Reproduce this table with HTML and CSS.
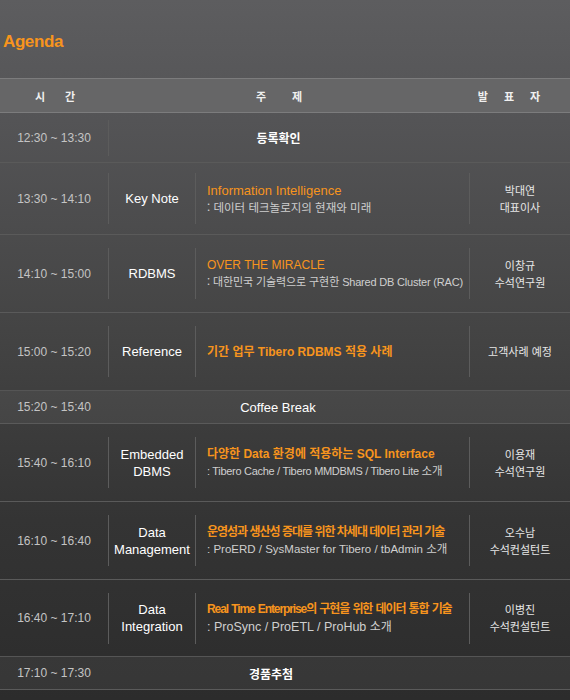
FILE: index.html
```html
<!DOCTYPE html>
<html lang="ko">
<head>
<meta charset="utf-8">
<title>Agenda</title>
<link rel="stylesheet" href="styles.css">
</head>
<body>
<div class="page">
  <h1 class="title">Agenda</h1>
  <div class="head">
    <div class="hcell h-time"><span>시</span><span>간</span></div>
    <div class="hcell h-topic"><span>주</span><span>제</span></div>
    <div class="hcell h-spk"><span>발</span><span>표</span><span>자</span></div>
  </div>

  <div class="row r50">
    <div class="time">12:30 ~ 13:30</div>
    <div class="merged sep"><span class="event">등록확인</span></div>
  </div>

  <div class="row r72">
    <div class="time">13:30 ~ 14:10</div>
    <div class="cell track sep">Key Note</div>
    <div class="cell topic sep">
      <div class="t-main">Information Intelligence</div>
      <div class="t-sub">: 데이터 테크놀로지의 현재와 미래</div>
    </div>
    <div class="cell spk sep">박대연<br>대표이사</div>
  </div>

  <div class="row r78">
    <div class="time">14:10 ~ 15:00</div>
    <div class="cell track sep">RDBMS</div>
    <div class="cell topic sep">
      <div class="t-main caps">OVER THE MIRACLE</div>
      <div class="t-sub small">: 대한민국 기술력으로 구현한 <span class="en">Shared DB Cluster (RAC)</span></div>
    </div>
    <div class="cell spk sep">이창규<br>수석연구원</div>
  </div>

  <div class="row r78">
    <div class="time">15:00 ~ 15:20</div>
    <div class="cell track sep">Reference</div>
    <div class="cell topic sep">
      <div class="t-main kr">기간 업무 Tibero RDBMS 적용 사례</div>
    </div>
    <div class="cell spk sep">고객사례 예정</div>
  </div>

  <div class="row r34 light">
    <div class="time">15:20 ~ 15:40</div>
    <div class="merged"><span class="event ev-en">Coffee Break</span></div>
  </div>

  <div class="row r78">
    <div class="time">15:40 ~ 16:10</div>
    <div class="cell track sep">Embedded<br>DBMS</div>
    <div class="cell topic sep">
      <div class="t-main kr">다양한 Data 환경에 적용하는 SQL Interface</div>
      <div class="t-sub"><span class="en tight">: Tibero Cache / Tibero MMDBMS / Tibero Lite </span>소개</div>
    </div>
    <div class="cell spk sep">이용재<br>수석연구원</div>
  </div>

  <div class="row r78">
    <div class="time">16:10 ~ 16:40</div>
    <div class="cell track sep">Data<br>Management</div>
    <div class="cell topic sep">
      <div class="t-main kr narrow">운영성과 생산성 증대를 위한 차세대 데이터 관리 기술</div>
      <div class="t-sub"><span class="en wide">: ProERD / SysMaster for Tibero / tbAdmin </span>소개</div>
    </div>
    <div class="cell spk sep">오수남<br>수석컨설턴트</div>
  </div>

  <div class="row r77">
    <div class="time">16:40 ~ 17:10</div>
    <div class="cell track sep">Data<br>Integration</div>
    <div class="cell topic sep">
      <div class="t-main kr narrow spaced">Real Time Enterprise의 구현을 위한 데이터 통합 기술</div>
      <div class="t-sub big"><span class="en">: ProSync / ProETL / ProHub </span>소개</div>
    </div>
    <div class="cell spk sep">이병진<br>수석컨설턴트</div>
  </div>

  <div class="row r34 light">
    <div class="time">17:10 ~ 17:30</div>
    <div class="merged"><span class="event ev-last">경품추첨</span></div>
  </div>
</div>
</body>
</html>
```

FILE: styles.css
```css
* { box-sizing: border-box; }
html, body { margin: 0; padding: 0; }
body {
  background: #2b2b2b;
  font-family: "Liberation Sans", "Noto Sans CJK KR", sans-serif;
}
.page {
  width: 570px;
  height: 700px;
  overflow: hidden;
  background: linear-gradient(180deg, #5d5d5f 0px, #545456 120px, #444444 330px, #343434 520px, #2c2c2c 700px);
}
.title {
  margin: 0;
  height: 78px;
  padding: 32px 0 0 3px;
  font-family: "Liberation Sans", sans-serif;
  font-weight: bold;
  font-size: 17px;
  letter-spacing: -0.4px;
  color: #f7941d;
  line-height: 20px;
}
.head {
  display: flex;
  height: 35px;
  background: #666667;
  border-top: 1px solid #7c7c7d;
  border-bottom: 1px solid #7c7c7d;
}
.hcell {
  display: flex;
  justify-content: center;
  align-items: center;
  font-family: "Noto Sans CJK KR", sans-serif;
  font-weight: bold;
  font-size: 11px;
  color: #f0f0f0;
}
.h-time { width: 110px; gap: 20px; }
.h-topic { width: 338px; gap: 26px; }
.h-spk { width: 122px; gap: 16px; }

.row {
  display: flex;
  align-items: center;
  border-bottom: 1px solid #5a5a5a;
}
.r50 { height: 50px; }
.r72 { height: 72px; }
.r78 { height: 78px; }
.r77 { height: 77px; }
.r34 { height: 34px; }
.row.light { background: rgba(255, 255, 255, 0.05); border-top: 1px solid #555; margin-top: -1px; }

.time {
  width: 108px;
  text-align: center;
  font-size: 12px;
  color: #c4c4c4;
  flex: none;
}
.cell {
  height: 51px;
  display: flex;
  flex-direction: column;
  justify-content: center;
  flex: none;
}
.sep { border-left: 1px solid #5c5c5c; }
.track {
  width: 87px;
  text-align: center;
  font-size: 13px;
  line-height: 17px;
  color: #ffffff;
}
.topic {
  width: 274px;
  padding-left: 11px;
}
.t-main {
  font-size: 13px;
  line-height: 16px;
  color: #f7941d;
  white-space: nowrap;
}
.t-main.caps { font-size: 12px; }
.t-main.kr {
  font-family: "Liberation Sans", "Noto Sans CJK KR", sans-serif;
  font-weight: bold;
  font-size: 12px;
}
.t-main.narrow { letter-spacing: -1px; }
.t-main.spaced { letter-spacing: -1.1px; word-spacing: 1px; }
.t-sub {
  font-family: "Noto Sans CJK KR", sans-serif;
  font-size: 11.5px;
  line-height: 16px;
  color: #cfcfcf;
  white-space: nowrap;
}
.t-sub.small { font-size: 11px; letter-spacing: -0.1px; }
.t-sub .en {
  font-family: "Liberation Sans", sans-serif;
  font-size: 11px;
  letter-spacing: -0.2px;
}
.t-sub .en.tight { letter-spacing: -0.3px; }
.t-sub .en.wide { font-size: 11.5px; letter-spacing: 0; }
.t-sub.big { font-size: 12px; line-height: 17px; }
.t-sub.big .en { font-size: 12.5px; letter-spacing: 0; }
.spk {
  width: 101px;
  text-align: center;
  font-family: "Noto Sans CJK KR", sans-serif;
  font-size: 11px;
  line-height: 17px;
  color: #e6e6e6;
}
.merged {
  width: 340px;
  height: 36px;
  display: flex;
  align-items: center;
  justify-content: center;
}
.r34 .merged { height: 34px; }
.event {
  font-family: "Noto Sans CJK KR", sans-serif;
  font-weight: bold;
  font-size: 12px;
  color: #ffffff;
}
.event.ev-en {
  font-family: "Liberation Sans", sans-serif;
  font-weight: normal;
  font-size: 13px;
}
.event.ev-last { margin-right: 14px; }
```
